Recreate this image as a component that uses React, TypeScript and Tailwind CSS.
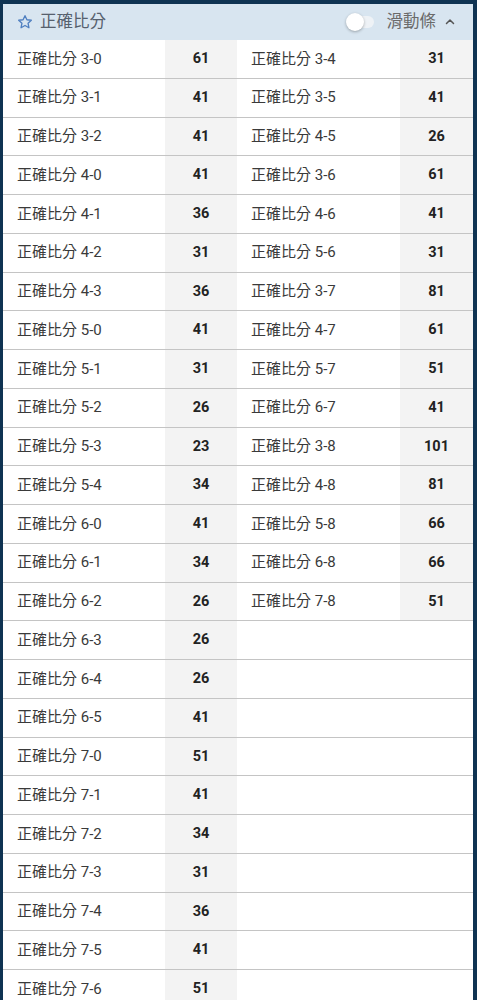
import React from "react";

const left: [string, number][] = [
  ["3-0", 61], ["3-1", 41], ["3-2", 41], ["4-0", 41], ["4-1", 36], ["4-2", 31], ["4-3", 36],
  ["5-0", 41], ["5-1", 31], ["5-2", 26], ["5-3", 23], ["5-4", 34], ["6-0", 41], ["6-1", 34],
  ["6-2", 26], ["6-3", 26], ["6-4", 26], ["6-5", 41], ["7-0", 51], ["7-1", 41], ["7-2", 34],
  ["7-3", 31], ["7-4", 36], ["7-5", 41], ["7-6", 51],
];
const right: [string, number][] = [
  ["3-4", 31], ["3-5", 41], ["4-5", 26], ["3-6", 61], ["4-6", 41], ["5-6", 31], ["3-7", 81],
  ["4-7", 61], ["5-7", 51], ["6-7", 41], ["3-8", 101], ["4-8", 81], ["5-8", 66], ["6-8", 66],
  ["7-8", 51],
];

function Cell({ item, valueW }: { item?: [string, number]; valueW: string }) {
  if (!item) return <div className="flex-1" />;
  return (
    <div className="flex flex-1 h-full">
      <div className="flex-1 flex items-center pl-[14px] text-[15px] text-[#3a3a3a]">
        正確比分 {item[0]}
      </div>
      <div className={`${valueW} flex items-center justify-center bg-[#f3f3f3] text-[14.5px] font-bold text-[#222]`}>
        {item[1]}
      </div>
    </div>
  );
}

export default function App() {
  return (
    <div
      className="w-[477px] h-[1000px] overflow-hidden bg-[#0f3352] pt-[4px] pl-[3px] pr-[4px]"
      style={{ fontFamily: "Roboto, 'Noto Sans CJK TC', sans-serif" }}
    >
      <div className="bg-white">
        <div className="h-[36px] bg-[#d8e5f0] flex items-center pl-[14px] pr-[17px]">
          <svg width="16" height="16" viewBox="0 0 24 24" fill="none" stroke="#4f7fc0" strokeWidth="2" strokeLinejoin="round">
            <path d="M12 2.5l2.9 6.1 6.6.8-4.9 4.6 1.3 6.6L12 17.3l-5.9 3.3 1.3-6.6-4.9-4.6 6.6-.8z" />
          </svg>
          <span className="ml-[7px] text-[16.5px] text-[#56606d]">正確比分</span>
          <div className="flex-1" />
          <div className="relative w-[30px] h-[18px] mr-[11px]">
            <div className="absolute left-[6px] top-[3px] w-[22px] h-[12px] rounded-full bg-[#eef2f6]" />
            <div className="absolute left-0 top-0 w-[18px] h-[18px] rounded-full bg-white shadow-[0_1px_3px_rgba(0,0,0,0.3)]" />
          </div>
          <span className="text-[16.5px] text-[#6a6a6a]">滑動條</span>
          <svg className="ml-[8px]" width="12" height="12" viewBox="0 0 24 24" fill="none" stroke="#555" strokeWidth="3" strokeLinecap="round" strokeLinejoin="round">
            <path d="M5 15l7-7 7 7" />
          </svg>
        </div>
        {left.map((l, i) => (
          <div key={i} className="flex h-[38.75px] border-b border-[#c4c4c4]">
            <div className="w-[234px] h-full flex">
              <Cell item={l} valueW="w-[72px]" />
            </div>
            <div className="w-[236px] h-full flex">
              <Cell item={right[i]} valueW="w-[73px]" />
            </div>
          </div>
        ))}
      </div>
    </div>
  );
}
